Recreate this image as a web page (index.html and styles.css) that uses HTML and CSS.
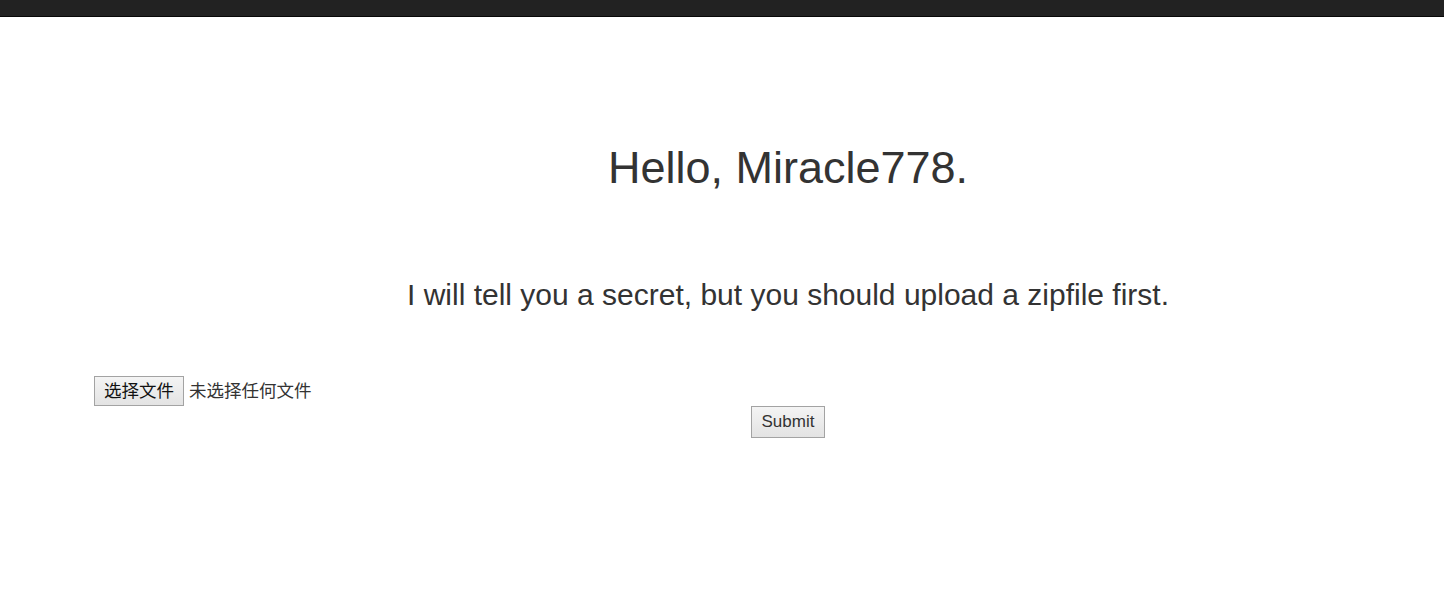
FILE: index.html
```html
<!DOCTYPE html>
<html>
<head>
<meta charset="utf-8">
<link rel="stylesheet" href="styles.css">
</head>
<body>
<div class="topbar"></div>
<div class="main">
  <h1 class="title">Hello, Miracle778.</h1>
  <p class="lead">I will tell you a secret, but you should upload a zipfile first.</p>
  <form class="upload">
    <div class="file-row">
      <span class="btn file-btn">选择文件</span>
      <span class="file-status">未选择任何文件</span>
    </div>
    <div class="submit-row">
      <span class="btn submit-btn">Submit</span>
    </div>
  </form>
</div>
</body>
</html>
```
FILE: styles.css
```css
html, body {
  margin: 0;
  padding: 0;
  background: #fff;
}
body {
  font-family: "Liberation Sans", Arial, "Noto Sans CJK SC", sans-serif;
  color: #333;
}
.topbar {
  height: 16px;
  background: #222;
  border-bottom: 1px solid #080808;
}
.main {
  padding-left: 94px;
}
.title {
  margin: 126px 0 0 38px;
  font-size: 45px;
  font-weight: normal;
  line-height: 50px;
  text-align: center;
}
.lead {
  margin: 85px 0 0 38px;
  font-size: 30px;
  line-height: 33px;
  text-align: center;
}
.upload {
  margin-top: 65px;
}
.file-row {
  display: flex;
  align-items: center;
  height: 30px;
}
.btn {
  display: inline-flex;
  align-items: center;
  justify-content: center;
  box-sizing: border-box;
  border: 1px solid #a3a3a3;
  background: linear-gradient(#f4f4f4, #e3e3e3);
  color: #111;
}
.file-btn {
  width: 90px;
  height: 30px;
  padding-bottom: 3px;
  font-family: "Noto Sans CJK SC", sans-serif;
  font-size: 17.5px;
}
.file-status {
  margin-left: 5px;
  padding-bottom: 4px;
  font-family: "Noto Sans CJK SC", sans-serif;
  font-size: 17.5px;
  color: #333;
}
.submit-row {
  display: flex;
  justify-content: center;
  padding-left: 38px;
}
.submit-btn {
  width: 74px;
  height: 32px;
  font-size: 17px;
  color: #333;
}
```
